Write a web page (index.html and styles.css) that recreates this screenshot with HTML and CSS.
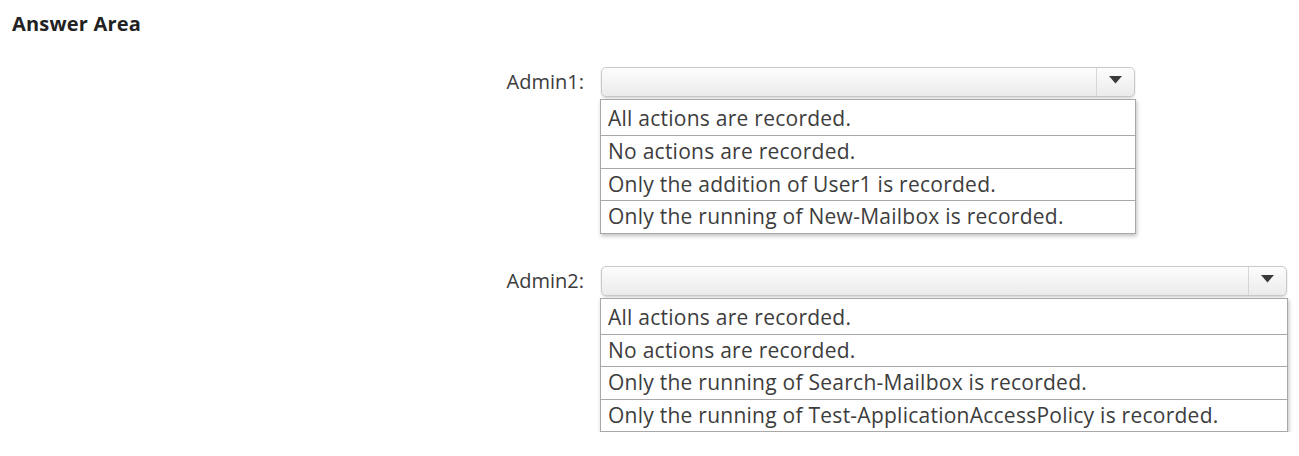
FILE: index.html
```html
<!DOCTYPE html>
<html>
<head>
<meta charset="utf-8">
<link rel="stylesheet" href="styles.css">
</head>
<body>
<h1 class="title">Answer Area</h1>
<div class="form">
  <div class="field">
    <div class="label">Admin1:</div>
    <div class="control w1">
      <div class="select">
        <div class="select-value"></div>
        <div class="select-btn"><svg width="13" height="8" viewBox="0 0 13 8"><path d="M0 0H13L6.5 7.5Z" fill="#3a3a3a"/></svg></div>
      </div>
      <ul class="options">
        <li>All actions are recorded.</li>
        <li>No actions are recorded.</li>
        <li>Only the addition of User1 is recorded.</li>
        <li>Only the running of New-Mailbox is recorded.</li>
      </ul>
    </div>
  </div>
  <div class="field second">
    <div class="label">Admin2:</div>
    <div class="control w2">
      <div class="select">
        <div class="select-value"></div>
        <div class="select-btn"><svg width="13" height="8" viewBox="0 0 13 8"><path d="M0 0H13L6.5 7.5Z" fill="#3a3a3a"/></svg></div>
      </div>
      <ul class="options">
        <li>All actions are recorded.</li>
        <li>No actions are recorded.</li>
        <li>Only the running of Search-Mailbox is recorded.</li>
        <li>Only the running of Test-ApplicationAccessPolicy is recorded.</li>
      </ul>
    </div>
  </div>
</div>
</body>
</html>
```
FILE: styles.css
```css
* { box-sizing: border-box; }
body {
  margin: 0;
  background: #fff;
  font-family: "Open Sans", "Noto Sans", sans-serif;
  color: #3a3a3a;
}
.title {
  margin: 0;
  padding: 12px 0 0 12px;
  font-size: 20px;
  line-height: 24px;
  font-weight: 700;
  color: #222;
  letter-spacing: 0.2px;
}
.form {
  padding: 31px 0 0 0;
  display: flex;
  flex-direction: column;
}
.field {
  display: flex;
  align-items: flex-start;
}
.field.second { margin-top: 32px; }
.label {
  width: 584px;
  text-align: right;
  font-size: 20px;
  line-height: 29px;
  margin-right: 16px;
  color: #3c3c3c;
}
.control { display: flex; flex-direction: column; }
.w1 { width: 536px; }
.w2 { width: 688px; }
.select {
  height: 30px;
  margin-left: 1px;
  margin-right: 1px;
  border: 1px solid #c9c9c9;
  border-radius: 5px;
  background: linear-gradient(#fdfdfd, #ebebeb);
  box-shadow: 0 1px 2px rgba(0,0,0,0.18);
  display: flex;
}
.select-value { flex: 1; }
.select-btn {
  width: 38px;
  border-left: 1px solid #d6d6d6;
  display: flex;
  align-items: center;
  justify-content: center;
  padding-bottom: 4px;
}
.options {
  list-style: none;
  margin: 2px 0 0 0;
  padding: 0;
  border: 1px solid #a8a8a8;
  background: #fff;
  box-shadow: 1px 2px 4px rgba(0,0,0,0.25);
}
.options li {
  height: 32.5px;
  line-height: 31px;
  padding-left: 7px;
  font-size: 21px;
  letter-spacing: 0.25px;
  color: #3d3d3d;
  border-top: 1px solid #a8a8a8;
  white-space: nowrap;
}
.options li:first-child { border-top: none; height: 35px; line-height: 36px; }
```
